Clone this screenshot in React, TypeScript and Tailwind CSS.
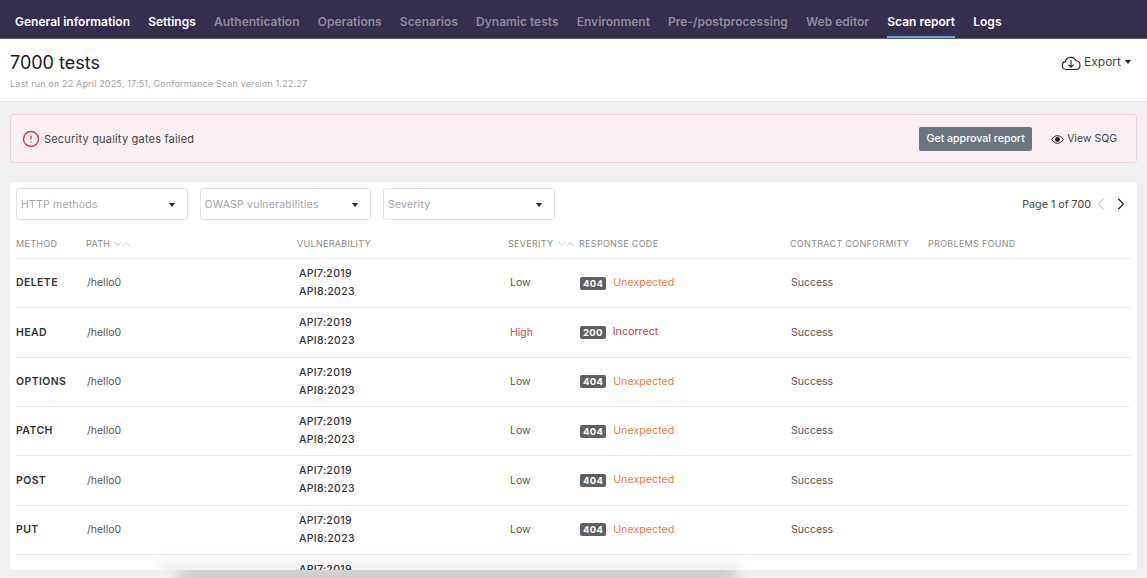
import { ChevronLeft, ChevronRight, CircleAlert } from "lucide-react";

const tabs = [
  { label: "General information", on: true },
  { label: "Settings", on: true },
  { label: "Authentication" },
  { label: "Operations" },
  { label: "Scenarios" },
  { label: "Dynamic tests" },
  { label: "Environment" },
  { label: "Pre-/postprocessing" },
  { label: "Web editor" },
  { label: "Scan report", on: true, active: true },
  { label: "Logs", on: true },
];

const rows = [
  { method: "DELETE", severity: "Low", code: "404", result: "Unexpected" },
  { method: "HEAD", severity: "High", code: "200", result: "Incorrect" },
  { method: "OPTIONS", severity: "Low", code: "404", result: "Unexpected" },
  { method: "PATCH", severity: "Low", code: "404", result: "Unexpected" },
  { method: "POST", severity: "Low", code: "404", result: "Unexpected" },
  { method: "PUT", severity: "Low", code: "404", result: "Unexpected" },
];

const filters = ["HTTP methods", "OWASP vulnerabilities", "Severity"];

function Caret() {
  return <span className="block h-0 w-0 border-x-[3.5px] border-t-[4px] border-x-transparent border-t-[#222]" />;
}

function SortArrows() {
  return (
    <svg width="16" height="6" viewBox="0 0 16 6" fill="none" stroke="#c8c8c8" className="ml-[4px]">
      <path d="M0.5 1l3.5 3.5 3.5-3.5M8.5 5l3.5-3.5 3.5 3.5" />
    </svg>
  );
}

function CloudIcon() {
  return (
    <svg width="20" height="17" viewBox="0 0 20 17" fill="none" stroke="#222" strokeWidth="1.1" className="mr-[3px]">
      <path d="M5 15.5a4 4 0 0 1-.6-7.9A5.6 5.6 0 0 1 15 6.8a4.4 4.4 0 0 1 .5 8.7Z" />
      <path d="M10 6v7M7.4 10.6 10 13.2l2.6-2.6" />
    </svg>
  );
}

function EyeIcon() {
  return (
    <svg width="13" height="9" viewBox="0 0 13 9" fill="none" className="mr-[3px]">
      <path d="M.7 4.5C2.5 1.8 4.5.7 6.5.7s4 1.1 5.8 3.8c-1.8 2.7-3.8 3.8-5.8 3.8S2.5 7.2.7 4.5Z" stroke="#222" strokeWidth="1" />
      <circle cx="6.5" cy="4.5" r="2.4" fill="#222" />
    </svg>
  );
}

export default function App() {
  return (
    <div className="relative h-[578px] overflow-hidden bg-[#f0f0f0] font-['Inter',sans-serif]">
      {/* Nav */}
      <div className="flex h-[39px] gap-[18.2px] border-b border-[#56546b] bg-[#352e4e] pl-[15px]">
        {tabs.map(t => (
          <div
            key={t.label}
            className={`flex h-[38px] items-center border-b-2 pt-[7px] text-[12px] font-semibold ${t.on ? "text-white" : "text-[#8f8c9a]"} ${t.active ? "border-[#6f9ff0]" : "border-transparent"}`}
          >
            {t.label}
          </div>
        ))}
      </div>

      {/* Header */}
      <div className="flex h-[63px] items-start justify-between border-b border-[#dedede] bg-white pl-[10px] pr-[16px]">
        <div>
          <div className="mt-[12px] text-[18px] leading-[23px] text-[#1a1a1a]">7000 tests</div>
          <div className="mt-[4px] text-[9px] leading-[12px] tracking-[0.16px] text-[#a3a3a3]">
            Last run on 22 April 2025, 17:51, Conformance Scan version 1.22.27
          </div>
        </div>
        <div className="mt-[14px] flex items-center text-[12px] leading-[18px] text-[#444]">
          <CloudIcon />
          Export
          <span className="ml-[4px] flex items-center"><Caret /></span>
        </div>
      </div>

      {/* Alert */}
      <div className="mx-[10px] mt-[12px] flex h-[49px] items-center justify-between rounded-[3px] border border-[#f3cfd8] bg-[#fbf0f3] pl-[11px] pr-[19px]">
        <div className="flex items-center pt-[1px] text-[11px] tracking-[0.2px] text-[#444]">
          <CircleAlert size={18} strokeWidth={1.75} className="mr-[4px] text-[#d9303f]" />
          Security quality gates failed
        </div>
        <div className="flex items-center pt-[1px]">
          <div className="flex h-[24px] w-[113px] items-center justify-center rounded-[2px] bg-[#6c757d] text-[10.6px] font-medium text-white">
            Get approval report
          </div>
          <div className="ml-[19px] flex items-center text-[10.5px] text-[#444]">
            <EyeIcon />
            View SQG
          </div>
        </div>
      </div>

      {/* Shadow below the card */}
      <div className="pointer-events-none absolute bottom-[-6px] left-[180px] h-[16px] w-[555px] bg-black/20 blur-[8px]" />

      {/* Card */}
      <div className="relative mx-[10px] mt-[19px] h-[388px] overflow-hidden rounded-[3px] bg-white px-[6px]">
        <div className="flex items-center justify-between pt-[6px]">
          <div className="flex gap-[12px]">
            {filters.map(f => (
              <div
                key={f}
                className="flex h-[32px] w-[171.5px] items-center justify-between rounded-[3px] border border-[#e4e4e4] pl-[4px] pr-[12px] pt-[1px] text-[10.5px] tracking-[0.2px] text-[#a3a3a3]"
              >
                {f}
                <Caret />
              </div>
            ))}
          </div>
          <div className="flex items-center text-[10.7px] text-[#444]">
            <span className="pt-[2px]">Page 1 of 700</span>
            <ChevronLeft size={20} strokeWidth={0.9} className="text-[#999]" />
            <ChevronRight size={20} strokeWidth={1.3} className="text-[#222]" />
          </div>
        </div>

        <div className="grid h-[39px] grid-cols-[70px_211px_211px_71px_211px_138px_1fr] items-center border-b border-[#ececec] pt-[9px] text-[9px] tracking-[0.3px] text-[#8c8c8c]">
          <div>METHOD</div>
          <div className="flex items-center">PATH<SortArrows /></div>
          <div>VULNERABILITY</div>
          <div className="flex items-center">SEVERITY<SortArrows /></div>
          <div>RESPONSE CODE</div>
          <div>CONTRACT CONFORMITY</div>
          <div>PROBLEMS FOUND</div>
        </div>

        {rows.map(r => (
          <div
            key={r.method}
            className="grid h-[49.33px] grid-cols-[70px_211px_211px_71px_211px_138px_1fr] items-center border-b border-[#e8e8e8] text-[10.5px] text-[#555]"
          >
            <div className="font-semibold tracking-[0.4px] text-[#333]">{r.method}</div>
            <div className="pl-[1px]">/hello0</div>
            <div className="pl-[2px] text-[10.5px] font-medium leading-[18px] tracking-[0.3px] text-[#333]">
              <div>API7:2019</div>
              <div>API8:2023</div>
            </div>
            <div className={`pl-[2px] ${r.severity === "High" ? "text-[#d63c4c]" : ""}`}>{r.severity}</div>
            <div className="flex items-center pl-[1px]">
              <span className="mr-[7px] rounded-[2px] bg-[#5f5f5f] px-[3px] text-[9.5px] font-bold leading-[13px] tracking-[0.3px] text-white">
                {r.code}
              </span>
              <span className={`text-[10.7px] ${r.result === "Incorrect" ? "text-[#d0364a]" : "text-[#f07c45]"}`}>{r.result}</span>
            </div>
            <div className="pl-[1px]">Success</div>
            <div />
          </div>
        ))}

        {/* Last row, cut off by the card */}
        <div className="grid grid-cols-[70px_211px_1fr] pt-[6px] text-[10.5px] font-medium leading-[18px] tracking-[0.3px] text-[#333]">
          <div className="col-start-3 pl-[2px]">API7:2019</div>
        </div>

        {/* Shadow falling over the card */}
        <div className="pointer-events-none absolute bottom-[-4px] left-[150px] h-[18px] w-[580px] bg-gradient-to-b from-transparent to-black/10 blur-[5px]" />
      </div>
    </div>
  );
}
